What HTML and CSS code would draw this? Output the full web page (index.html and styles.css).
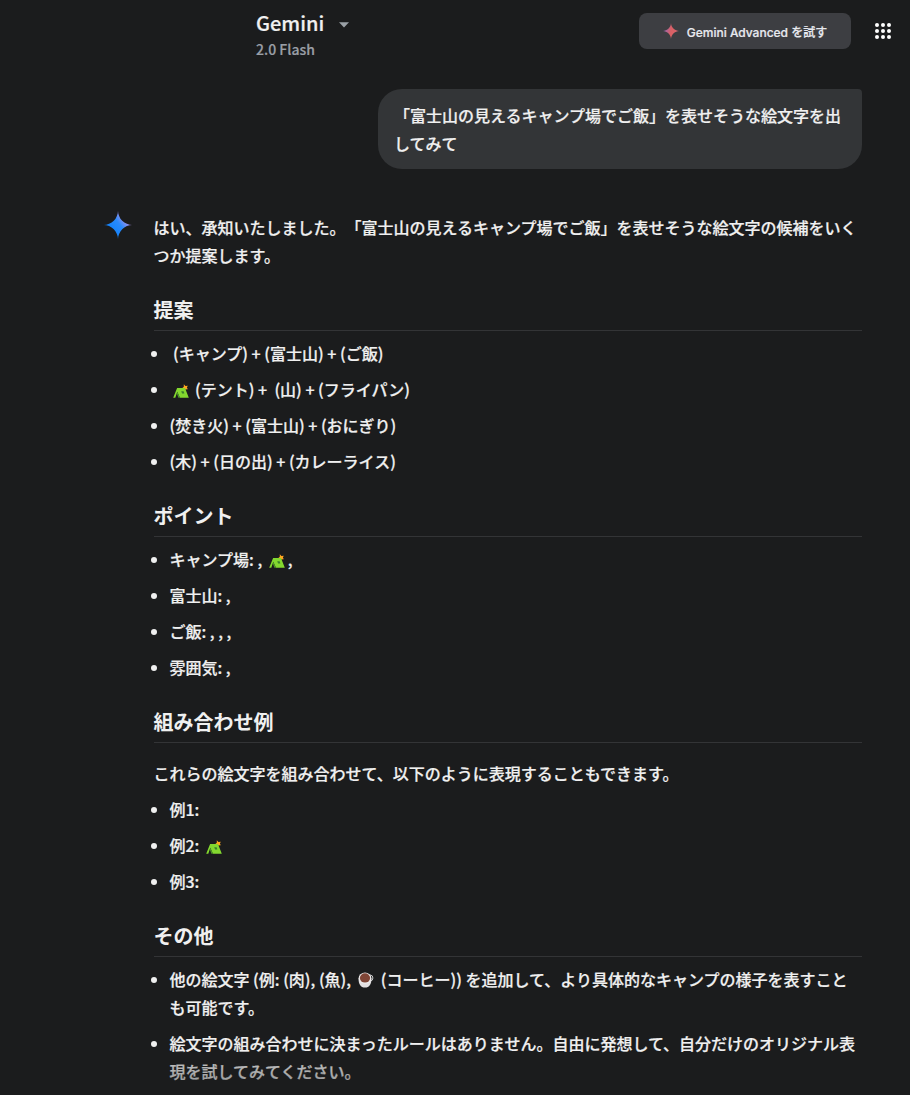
FILE: index.html
```html
<!DOCTYPE html>
<html lang="ja">
<head>
<meta charset="utf-8">
<title>Gemini</title>
<link rel="stylesheet" href="styles.css">
</head>
<body>
<svg class="defs" width="0" height="0" aria-hidden="true">
  <defs>
    <linearGradient id="blue" x1="0.15" y1="0.75" x2="0.85" y2="0.2">
      <stop offset="0.2" stop-color="#1683fa"/><stop offset="0.55" stop-color="#298afb"/><stop offset="0.9" stop-color="#b093ed"/>
    </linearGradient>
    <linearGradient id="red" x1="0" y1="0.4" x2="1" y2="0.6">
      <stop offset="0" stop-color="#9168c0"/><stop offset="0.5" stop-color="#da6063"/><stop offset="1" stop-color="#d96570"/>
    </linearGradient>
    <symbol id="spark" viewBox="0 0 28 28"><path d="M14 0C14 3 15.6 7.3 18.2 9.8C20.7 12.4 25 14 28 14C25 14 20.7 15.6 18.2 18.2C15.6 20.7 14 25 14 28C14 25 12.4 20.7 9.8 18.2C7.3 15.6 3 14 0 14C3 14 7.3 12.4 9.8 9.8C12.4 7.3 14 3 14 0Z"/></symbol>
    <symbol id="tent" viewBox="0 0 16 14">
      <path fill="#ffa51f" d="M8.8 4.4L10.8 2.8L10.8 .2L12.4 1.9L14.8 1.7L13.9 3.5L14.8 5.3L11.8 5.6Z"/>
      <path fill="#83d82f" d="M4.1 4H12L15.8 13.8H6.9L4.3 7.8L2.3 13.8H.2Z"/>
      <path fill="#4d9c28" d="M4.3 7.8L6.9 13.8H5.4L3.8 9.4Z"/>
      <path fill="#39822b" d="M8.2 7.2H10.6L11.4 9.6H9.1Z"/>
    </symbol>
  </defs>
</svg>
<header class="topbar">
  <div class="brand">
    <div class="brand-name">Gemini
      <svg class="caret" width="10" height="6" viewBox="0 0 10 6"><path d="M0 .3H10L5 5.4Z" fill="#9aa0a6"/></svg>
    </div>
    <div class="brand-model">2.0 Flash</div>
  </div>
  <div class="actions">
    <button class="upgrade"><svg class="upgrade-icon" fill="url(#red)"><use href="#spark"/></svg>Gemini Advanced を試す</button>
    <svg class="apps" width="16" height="16" viewBox="0 0 16 16" fill="#fff"><circle cx="2" cy="2" r="2"/><circle cx="8" cy="2" r="2"/><circle cx="14" cy="2" r="2"/><circle cx="2" cy="8" r="2"/><circle cx="8" cy="8" r="2"/><circle cx="14" cy="8" r="2"/><circle cx="2" cy="14" r="2"/><circle cx="8" cy="14" r="2"/><circle cx="14" cy="14" r="2"/></svg>
  </div>
</header>
<main class="chat">
  <div class="prompt">「富士山の見えるキャンプ場でご飯」を表せそうな絵文字を出<br>してみて</div>
  <article class="reply">
    <svg class="avatar" fill="url(#blue)"><use href="#spark"/></svg>
    <div class="answer">
      <p>はい、承知いたしました。「富士山の見えるキャンプ場でご飯」を表せそうな絵文字の候補をいく<br>つか提案します。</p>
      <h3>提案</h3>
      <ul>
        <li>&nbsp;(キャンプ) + (富士山) + (ご飯)</li>
        <li><svg class="emoji lead"><use href="#tent"/></svg> (テント) + &nbsp;(山) + (フライパン)</li>
        <li>(焚き火) + (富士山) + (おにぎり)</li>
        <li>(木) + (日の出) + (カレーライス)</li>
      </ul>
      <h3>ポイント</h3>
      <ul>
        <li>キャンプ場: , <svg class="emoji lead"><use href="#tent"/></svg>,</li>
        <li>富士山: ,</li>
        <li>ご飯: , , ,</li>
        <li>雰囲気: ,</li>
      </ul>
      <h3>組み合わせ例</h3>
      <p class="note">これらの絵文字を組み合わせて、以下のように表現することもできます。</p>
      <ul>
        <li>例1:</li>
        <li>例2: <svg class="emoji lead"><use href="#tent"/></svg></li>
        <li>例3:</li>
      </ul>
      <h3>その他</h3>
      <ul>
        <li>他の絵文字 (例: (肉), (魚), <svg class="emoji cup" viewBox="0 0 16 16"><ellipse cx="12.6" cy="6" rx="2.3" ry="2.8" fill="none" stroke="#c9c9c9" stroke-width="1"/><path d="M.6 6.5C.4 12 2.6 15.6 7 15.6C11.4 15.6 13.6 12 13.4 6.5Z" fill="#e3e1e2"/><ellipse cx="7" cy="6.2" rx="6.4" ry="5.6" fill="#eceaea"/><ellipse cx="7" cy="5.9" rx="5.1" ry="4.6" fill="#804536"/></svg> (コーヒー)) を追加して、より具体的なキャンプの様子を表すこと<br>も可能です。</li>
        <li>絵文字の組み合わせに決まったルールはありません。自由に発想して、自分だけのオリジナル表<br>現を試してみてください。</li>
      </ul>
    </div>
  </article>
</main>
<div class="fade"></div>
</body>
</html>
```
FILE: styles.css
```css
* { box-sizing: border-box; }
body {
  margin: 0;
  height: 1095px;
  overflow: hidden;
  position: relative;
  background: #1b1c1d;
  color: #f0f0f0;
  font: 500 16px/28px "Noto Sans CJK JP", sans-serif;
  -webkit-text-stroke: 0.22px currentColor;
  text-spacing-trim: space-all;
  white-space: nowrap;
}
svg { -webkit-text-stroke: 0; }
.defs { position: absolute; }
.topbar {
  display: flex;
  justify-content: space-between;
  align-items: flex-start;
  height: 89px;
  padding: 9px 19px 0 256px;
}
.brand-name {
  display: flex;
  align-items: center;
  gap: 15px;
  font-size: 20px;
  line-height: 28px;
}
.caret { margin-top: 3px; }
.brand-model { color: #9a9fa6; font-size: 14px; line-height: 24px; }
.actions { display: flex; align-items: center; gap: 24px; padding-top: 4px; }
.upgrade {
  display: flex;
  align-items: center;
  justify-content: center;
  width: 212px;
  height: 36px;
  padding: 3px 0 0;
  border: 0;
  border-radius: 8px;
  background: #3d3e42;
  color: #e8eaf0;
  font: 500 12px/20px Inter, "Noto Sans CJK JP", sans-serif;
}
.upgrade-icon { width: 16px; height: 16px; margin: 0 8px 3px 0; }
.chat { padding: 0 48px 0 104px; }
.prompt {
  width: 484px;
  height: 80px;
  margin-left: auto;
  padding: 12px 16px;
  border-radius: 24px 4px 24px 24px;
  background: #333537;
}
.reply { display: flex; gap: 21.5px; padding-top: 44px; }
.avatar { flex: none; width: 28px; height: 28px; margin-top: -2px; }
.answer { flex: 1; }
p { margin: 0; }
h3 {
  margin: 27px 0 8px;
  padding-bottom: 6px;
  border-bottom: 1px solid #333436;
  font-size: 20px;
  line-height: 28px;
  font-weight: 700;
  -webkit-text-stroke: 0;
}
ul {
  display: grid;
  gap: 8px;
  margin: 0;
  padding: 0 0 0 16px;
  list-style: none;
}
li { position: relative; }
li::before {
  content: "";
  position: absolute;
  left: -18.5px;
  top: 12px;
  width: 6px;
  height: 6px;
  border-radius: 50%;
  background: #f0f0f0;
}
.note { margin: 16px 0 8px; }
.emoji { display: inline-block; width: 16px; height: 14px; vertical-align: -2px; }
.lead { margin: 0 3px 0 3px; }
.cup { width: 16px; height: 16px; margin: 0 3.5px 0 3px; vertical-align: -2px; }
.fade {
  position: absolute;
  left: 0;
  right: 0;
  bottom: 0;
  height: 36px;
  background: linear-gradient(to bottom, #1b1c1d33, #1b1c1d80);
}
```
